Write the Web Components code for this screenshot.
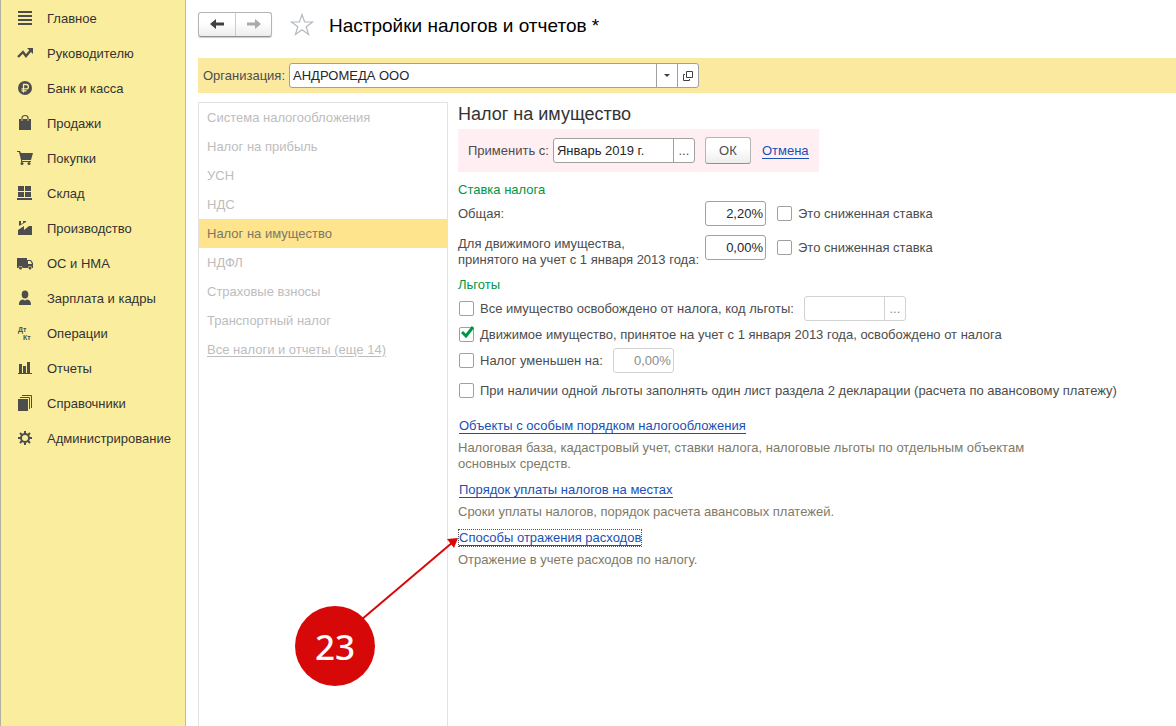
<!DOCTYPE html>
<html lang="ru">
<head>
<meta charset="utf-8">
<meta name="viewport" content="width=device-width, initial-scale=1">
<title>Настройки налогов и отчетов</title>
<style>
  html, body { margin: 0; height: 100%; }
  body {
    background: #fff;
    color: #4d4d4d;
    font: 13px/16px "Liberation Sans", Arial, sans-serif;
    --accent: #009646;
    --link: #1a50b4;
    --line: #a0a0a0;
  }
</style>
</head>
<body>
<app-shell>
  <side-nav slot="nav">
    <nav-item icon="menu">Главное</nav-item>
    <nav-item icon="trend">Руководителю</nav-item>
    <nav-item icon="ruble">Банк и касса</nav-item>
    <nav-item icon="bag">Продажи</nav-item>
    <nav-item icon="cart">Покупки</nav-item>
    <nav-item icon="store">Склад</nav-item>
    <nav-item icon="factory">Производство</nav-item>
    <nav-item icon="truck">ОС и НМА</nav-item>
    <nav-item icon="person">Зарплата и кадры</nav-item>
    <nav-item icon="dtkt">Операции</nav-item>
    <nav-item icon="chart">Отчеты</nav-item>
    <nav-item icon="books">Справочники</nav-item>
    <nav-item icon="gear">Администрирование</nav-item>
  </side-nav>
  <form-header>Настройки налогов и отчетов *</form-header>
  <org-bar></org-bar>
  <split-pane>
    <section-list slot="list">
      <section-item>Система налогообложения</section-item>
      <section-item>Налог на прибыль</section-item>
      <section-item>УСН</section-item>
      <section-item>НДС</section-item>
      <section-item selected>Налог на имущество</section-item>
      <section-item>НДФЛ</section-item>
      <section-item>Страховые взносы</section-item>
      <section-item>Транспортный налог</section-item>
      <section-item underlined>Все налоги и отчеты (еще 14)</section-item>
    </section-list>
    <property-tax-form></property-tax-form>
  </split-pane>
</app-shell>

<script>
const define = (name, html, setup) => {
  const template = document.createElement('template');
  template.innerHTML = html;
  customElements.define(name, class extends HTMLElement {
    constructor() {
      super();
      this.attachShadow({ mode: 'open' }).append(template.content.cloneNode(true));
    }
    connectedCallback() { if (setup) setup(this, this.shadowRoot); }
  });
};

const ICONS = {
  menu: '<path d="M1 1h14v2H1zM1 5h14v2H1zM1 9h14v2H1zM1 13h14v2H1z"/>',
  trend: '<path d="M1 12 6 7l3 4 5-6" fill="none" stroke="currentColor" stroke-width="2.4"/><path d="M10 3h6v6z"/>',
  ruble: '<circle cx="8" cy="8" r="7"/><path d="M6.500 12.500V4.500H9.200a2.200 2.200 0 0 1 0 4.400H4.500M4.500 10.800H9.500" fill="none" stroke="#fbed9e" stroke-width="1.300"/>',
  bag: '<path d="M2 4h2v2h2V4h4v2h2V4h2v11H2z"/><path d="M5 6V3a3 2.500 0 0 1 6 0V6" fill="none" stroke="currentColor" stroke-width="1.200"/>',
  cart: '<path d="M0 1h3l1 2h12l-2 7H5v1h9v1H4v-2L2 2H0z"/><circle cx="5" cy="13.500" r="1.500"/><circle cx="12" cy="13.500" r="1.500"/>',
  store: '<path d="M1 1h6v5H1zM8 1h6v5H8zM1 7h6v5H1zM8 7h6v5H8zM0 13h15v2H0z"/>',
  factory: '<path d="M1 15v-5l6-4v4l5-4h3v9zM2 1h2v3l2-1V1h3v1L2 6z"/>',
  truck: '<path fill-rule="evenodd" d="M0 3h10v2h4l2 3v5h-1a2 2 0 0 0-4 0H5.500a2 2 0 0 0-4 0H0zM11 6v3h4l-1.500-3z"/><circle cx="3.500" cy="13" r="1.500"/><circle cx="13" cy="13" r="1.500"/>',
  person: '<ellipse cx="8" cy="4.500" rx="3.300" ry="4"/><path d="M2 15c0-3.500 1-5 4-5.500l2 1 2-1c3 .5 4 2 4 5.500z"/>',
  dtkt: '<text x="1" y="7" font-size="7">Дт</text><text x="6" y="15" font-size="7">Кт</text>',
  chart: '<path d="M2 4h3v9H2zM6 6h3v7H6zM10 2h3v11h-3zM1 13h14v1H1z"/>',
  books: '<path d="M1 4h10v12H1z"/><path d="M3 2.500h9.500V14M5 .5h9.500V13" fill="none" stroke="currentColor"/>',
  gear: '<circle cx="8" cy="8" r="4" fill="none" stroke="currentColor" stroke-width="2"/><path d="M8 1v3M8 12v3M1 8h3M12 8h3M3 3l2.200 2.200M10.800 10.800 13 13M3 13l2.200-2.200M10.800 5.200 13 3" stroke="currentColor" stroke-width="2"/>'
};

define('app-shell', `
  <style>
    :host { display: flex; min-height: 100vh; }
    main { position: relative; flex: 1; min-width: 0; display: flex; flex-direction: column; padding-left: 12px; }
  </style>
  <slot name="nav"></slot>
  <main><slot></slot><step-callout>23</step-callout></main>`);

define('side-nav', `
  <style>
    :host { display: block; flex: 0 0 184px; background: #fbed9e; border-left: 1px solid #b4b0a0; border-right: 1px solid #c9bd83; }
    nav { display: flex; flex-direction: column; padding-top: 1px; }
  </style>
  <nav><slot></slot></nav>`);

define('nav-item', `
  <style>
    :host { display: block; }
    a { display: flex; align-items: center; gap: 14px; height: 35px; padding-left: 16px; color: #333; text-decoration: none; }
    svg { flex: none; width: 16px; height: 17px; overflow: visible; fill: #4d4d4d; color: #4d4d4d; font-weight: bold; }
  </style>
  <a href="#"><svg aria-hidden="true"></svg><span><slot></slot></span></a>`,
  (el, root) => { root.querySelector('svg').innerHTML = ICONS[el.getAttribute('icon')]; });

define('form-header', `
  <style>
    :host { display: flex; align-items: center; height: 48px; padding-bottom: 10px; }
    .history { display: flex; border: 1px solid #b4b4b4; border-bottom-color: #909090; border-radius: 3px; background: linear-gradient(#fff 40%, #ededed); box-shadow: 0 1px 1px #ccc; }
    button { display: grid; place-items: center; padding: 0; border: 0; background: none; }
    .history button { width: 36px; height: 23px; color: #404040; }
    .history button + button { border-left: 1px solid #ccc; color: #aaa; }
    .star { width: 24px; margin: 0 15px 0 18px; }
    h1 { margin: 0; padding-top: 3px; font-size: 19px; line-height: 24px; font-weight: normal; color: #000; }
  </style>
  <div class="history">
    <button aria-label="Назад"><svg width="14" height="10" fill="currentColor"><path d="M0 5 6 0v3.500h8v3H6V10z"/></svg></button>
    <button aria-label="Вперед"><svg width="14" height="10" fill="currentColor"><path d="M14 5 8 0v3.500H0v3h8V10z"/></svg></button>
  </div>
  <button class="star" aria-label="В избранное"><svg width="24" height="23" viewBox="0 0 24 23" fill="none" stroke="#b4bac0" stroke-width="1.200"><path d="M12 1.500 14.600 9H22.500L16.200 13.700 18.600 21.500 12 16.800 5.400 21.500 7.800 13.700 1.500 9H9.400z"/></svg></button>
  <h1><slot></slot></h1>`);

/* Labelled one-line field; pick="…" appends buttons on the right. */
define('text-field', `
  <style>
    :host { display: flex; align-items: center; gap: 4px; }
    :host([top]) { align-items: flex-start; }
    label { flex: none; white-space: pre-line; }
    :host([split]) label { width: 243px; }
    :host([top]) label { padding-top: 1px; }
    .box { display: flex; box-sizing: border-box; width: var(--field-width, 61px); height: 25px; border: 1px solid var(--line); border-radius: 3px; background: #fff; overflow: hidden; }
    input { flex: 1; min-width: 0; padding: 0 3px; border: 0; background: none; font: inherit; color: #262626; outline: 0; }
    :host([numeric]) input { text-align: right; padding-right: 2px; }
    button { flex: none; display: grid; place-items: center; width: 21px; padding: 0; border: 0; border-left: 1px solid var(--line); background: none; font: inherit; color: #4d4d4d; }
    :host([disabled]) { --line: #d2d2d2; }
    :host([disabled]) input, :host([disabled]) button { color: #8c8c8c; }
  </style>
  <label for="field"></label>
  <div class="box"><input id="field" type="text"></div>`,
  (el, root) => {
    const label = root.querySelector('label'), input = root.querySelector('input'), box = root.querySelector('.box');
    const disabled = el.hasAttribute('disabled');
    if (el.hasAttribute('label')) label.textContent = el.getAttribute('label');
    else label.remove();
    if (el.hasAttribute('hint')) input.setAttribute('aria-label', el.getAttribute('hint'));
    input.value = el.getAttribute('value') || '';
    input.disabled = disabled;
    const looks = {
      more: ['Выбрать', '...'],
      drop: ['Показать список', '<svg width="6" height="3" fill="#404040"><path d="M0 0h6L3 3z"/></svg>'],
      open: ['Открыть', '<svg width="10" height="10" fill="none" stroke="#404040"><path d="M3.500.5h6v6h-6zM2 3.500H.5v6h6V8"/></svg>']
    };
    for (const kind of (el.getAttribute('pick') || '').split(' ').filter(Boolean)) {
      const b = document.createElement('button');
      b.setAttribute('aria-label', looks[kind][0]);
      b.innerHTML = looks[kind][1];
      b.disabled = disabled;
      box.append(b);
    }
  });

define('tick-box', `
  <style>
    :host { display: block; }
    label { display: flex; align-items: center; gap: 6px; }
    input { appearance: none; flex: none; display: grid; box-sizing: border-box; width: 15px; height: 15px; margin: 0 0 0 1px; border: 1px solid var(--line); border-radius: 2px; background: #fff; }
    .mark { position: relative; display: flex; }
    .text { padding-top: 1px; }
    svg { position: absolute; left: 3px; top: -1px; display: none; pointer-events: none; }
    input:checked + svg { display: block; }
  </style>
  <label><span class="mark"><input type="checkbox"><svg width="15" height="14"><path d="M1 6l4 4L12 1" fill="none" stroke="#009646" stroke-width="3"/></svg></span><span class="text"><slot></slot></span></label>`,
  (el, root) => { root.querySelector('input').checked = el.hasAttribute('checked'); });

define('org-bar', `
  <style>
    :host { display: flex; align-items: center; height: 35px; padding-left: 5px; background: #fbe9a0; margin-bottom: 9px; }
    text-field { --field-width: 410px; }
  </style>
  <text-field label="Организация:" value="АНДРОМЕДА ООО" pick="drop open"></text-field>`);

define('split-pane', `
  <style>
    :host { display: flex; flex: 1; gap: 10px; }
    .form { flex: 1; min-width: 0; }
  </style>
  <slot name="list"></slot><div class="form"><slot></slot></div>`);

define('section-list', `
  <style>:host { display: block; box-sizing: border-box; flex: 0 0 250px; border: 1px solid #e3e3e3; border-bottom: 0; }</style>
  <nav><slot></slot></nav>`);

define('section-item', `
  <style>
    :host { display: block; }
    a { display: flex; align-items: center; height: 29px; padding-left: 8px; color: #bdbdbd; text-decoration: none; }
    :host([selected]) a { background: #fee48d; color: #7d7668; }
    :host([underlined]) a { text-decoration: underline; text-underline-offset: 2px; }
  </style>
  <a href="#"><slot></slot></a>`);

define('action-link', `
  <style>
    :host { display: block; }
    a { display: inline-block; box-sizing: border-box; height: 16px; margin-left: 1px; line-height: 15px; color: var(--link); text-decoration: none; border-bottom: 1px solid var(--link); vertical-align: top; }
    :host([current]) a { outline: 1px dotted #555; }
  </style>
  <a href="#"><slot></slot></a>`);

define('link-block', `
  <style>
    :host { display: flex; flex-direction: column; gap: 6px; }
    p { margin: 0; max-width: 580px; color: #7f7a66; }
  </style>
  <slot name="link"></slot><p><slot></slot></p>`);

define('property-tax-form', `
  <style>
    :host { display: block; }
    h2 { margin: 0 0 3px; font-size: 18px; line-height: 24px; font-weight: normal; color: #333; }
    h3 { margin: 10px 0 3px; font-size: 13px; line-height: 16px; font-weight: normal; color: var(--accent); }
    .apply { display: flex; align-items: center; width: fit-content; gap: 10px; padding: 9px 10px; background: #ffeff3; }
    .apply text-field { --field-width: 142px; }
    .ok { box-sizing: border-box; width: 46px; height: 27px; margin: -1px 0; padding: 0; border: 1px solid #b4b4b4; border-bottom-color: #909090; border-radius: 3px; background: linear-gradient(#fff 40%, #ededed); font: inherit; color: #4d4d4d; }
    .row { display: flex; align-items: center; gap: 10px; }
    .rates { display: flex; flex-direction: column; gap: 9px; }
    .rates .row { align-items: flex-start; height: 25px; }
    .rates .row + .row { height: 32px; }
    .rates tick-box { padding-top: 4px; }
    .relief { display: flex; flex-direction: column; gap: 5px; }
    .code { --field-width: 102px; }
    .links { display: flex; flex-direction: column; gap: 10px; margin-top: 19px; }
    .single { margin-top: 4px; }
  </style>
  <h2>Налог на имущество</h2>
  <div class="apply">
    <text-field label="Применить с:" value="Январь 2019 г." pick="more"></text-field>
    <button class="ok">ОК</button>
    <action-link>Отмена</action-link>
  </div>
  <h3>Ставка налога</h3>
  <div class="rates">
    <div class="row"><text-field split numeric label="Общая:" value="2,20%"></text-field><tick-box>Это сниженная ставка</tick-box></div>
    <div class="row"><text-field split top numeric label="Для движимого имущества,&#10;принятого на учет с 1 января 2013 года:" value="0,00%"></text-field><tick-box>Это сниженная ставка</tick-box></div>
  </div>
  <h3>Льготы</h3>
  <div class="relief">
    <div class="row"><tick-box>Все имущество освобождено от налога, код льготы:</tick-box><text-field class="code" hint="Код льготы" pick="more" disabled></text-field></div>
    <tick-box checked>Движимое имущество, принятое на учет с 1 января 2013 года, освобождено от налога</tick-box>
    <div class="row"><tick-box>Налог уменьшен на:</tick-box><text-field numeric hint="Налог уменьшен на" value="0,00%" disabled></text-field></div>
    <tick-box class="single">При наличии одной льготы заполнять один лист раздела 2 декларации (расчета по авансовому платежу)</tick-box>
  </div>
  <div class="links">
    <link-block><action-link slot="link">Объекты с особым порядком налогообложения</action-link>Налоговая база, кадастровый учет, ставки налога, налоговые льготы по отдельным объектам основных средств.</link-block>
    <link-block><action-link slot="link">Порядок уплаты налогов на местах</action-link>Сроки уплаты налогов, порядок расчета авансовых платежей.</link-block>
    <link-block><action-link slot="link" current>Способы отражения расходов</action-link>Отражение в учете расходов по налогу.</link-block>
  </div>`);

/* Numbered training marker laid over the form, its arrow aimed at the last link. */
define('step-callout', `
  <style>
    :host { position: absolute; left: 109px; top: 536px; width: 165px; height: 150px; pointer-events: none; }
    svg { position: absolute; inset: 0; }
    span { position: absolute; left: 0; bottom: 0; display: grid; place-items: center; box-sizing: border-box; width: 80px; height: 80px; padding-top: 2px; border-radius: 50%; background: #d70808; color: #fff; font: 500 35px/48px "Noto Sans", "Open Sans", sans-serif; }
  </style>
  <svg width="165" height="150"><path d="M66 84 158 6" stroke="#d70808" stroke-width="2"/><path d="M163 2 152 3l7 9z" fill="#d70808"/></svg>
  <span><slot></slot></span>`);
</script>
</body>
</html>
